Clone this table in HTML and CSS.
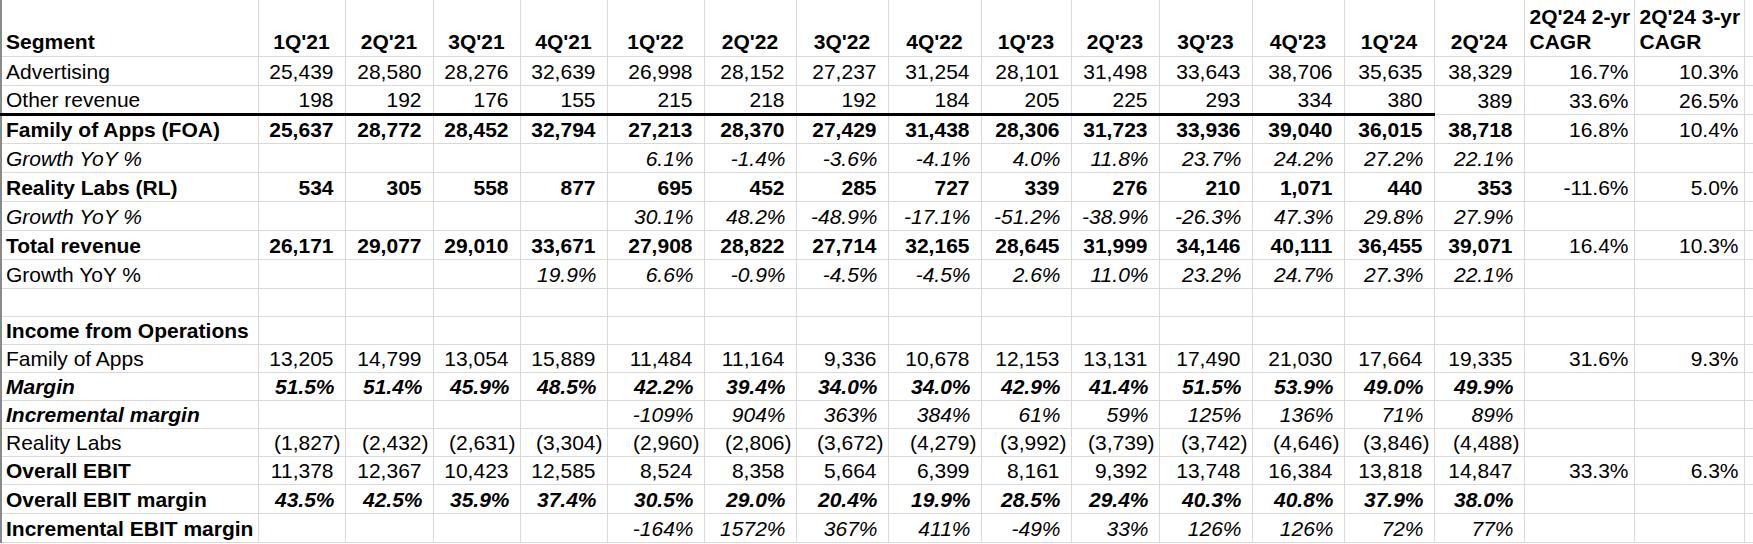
FILE: index.html
```html
<!DOCTYPE html>
<html lang="en">
<head>
<meta charset="utf-8">
<title>Segment financials</title>
<link rel="stylesheet" href="styles.css">
</head>
<body>
<table class="sheet">
<colgroup>
<col class="w-lbl"><col class="w87"><col class="w88"><col class="w87"><col class="w87"><col class="w97"><col class="w92"><col class="w92"><col class="w93"><col class="w90"><col class="w88"><col class="w93"><col class="w92"><col class="w90"><col class="w90"><col class="w110"><col class="w110"><col class="w-x">
</colgroup>
<tbody>
<tr class="hdr">
<td class="lbl b">Segment</td><td class="q">1Q'21</td><td class="q">2Q'21</td><td class="q">3Q'21</td><td class="q">4Q'21</td><td class="q">1Q'22</td><td class="q">2Q'22</td><td class="q">3Q'22</td><td class="q">4Q'22</td><td class="q">1Q'23</td><td class="q">2Q'23</td><td class="q">3Q'23</td><td class="q">4Q'23</td><td class="q">1Q'24</td><td class="q">2Q'24</td><td class="ch"><span class="nw">2Q'24 2-yr</span> CAGR</td><td class="ch"><span class="nw">2Q'24 3-yr</span> CAGR</td><td></td>
</tr>
<tr>
<td class="lbl">Advertising</td><td class="n">25,439</td><td class="n">28,580</td><td class="n">28,276</td><td class="n">32,639</td><td class="n">26,998</td><td class="n">28,152</td><td class="n">27,237</td><td class="n">31,254</td><td class="n">28,101</td><td class="n">31,498</td><td class="n">33,643</td><td class="n">38,706</td><td class="n">35,635</td><td class="n">38,329</td><td class="c">16.7%</td><td class="c">10.3%</td><td></td>
</tr>
<tr class="thick">
<td class="lbl">Other revenue</td><td class="n">198</td><td class="n">192</td><td class="n">176</td><td class="n">155</td><td class="n">215</td><td class="n">218</td><td class="n">192</td><td class="n">184</td><td class="n">205</td><td class="n">225</td><td class="n">293</td><td class="n">334</td><td class="n">380</td><td class="n">389</td><td class="c">33.6%</td><td class="c">26.5%</td><td></td>
</tr>
<tr>
<td class="lbl b">Family of Apps (FOA)</td><td class="n b">25,637</td><td class="n b">28,772</td><td class="n b">28,452</td><td class="n b">32,794</td><td class="n b">27,213</td><td class="n b">28,370</td><td class="n b">27,429</td><td class="n b">31,438</td><td class="n b">28,306</td><td class="n b">31,723</td><td class="n b">33,936</td><td class="n b">39,040</td><td class="n b">36,015</td><td class="n b">38,718</td><td class="c">16.8%</td><td class="c">10.4%</td><td></td>
</tr>
<tr>
<td class="lbl i">Growth YoY %</td><td></td><td></td><td></td><td></td><td class="p">6.1%</td><td class="p">-1.4%</td><td class="p">-3.6%</td><td class="p">-4.1%</td><td class="p">4.0%</td><td class="p">11.8%</td><td class="p">23.7%</td><td class="p">24.2%</td><td class="p">27.2%</td><td class="p">22.1%</td><td></td><td></td><td></td>
</tr>
<tr>
<td class="lbl b">Reality Labs (RL)</td><td class="n b">534</td><td class="n b">305</td><td class="n b">558</td><td class="n b">877</td><td class="n b">695</td><td class="n b">452</td><td class="n b">285</td><td class="n b">727</td><td class="n b">339</td><td class="n b">276</td><td class="n b">210</td><td class="n b">1,071</td><td class="n b">440</td><td class="n b">353</td><td class="c">-11.6%</td><td class="c">5.0%</td><td></td>
</tr>
<tr>
<td class="lbl i">Growth YoY %</td><td></td><td></td><td></td><td></td><td class="p">30.1%</td><td class="p">48.2%</td><td class="p">-48.9%</td><td class="p">-17.1%</td><td class="p">-51.2%</td><td class="p">-38.9%</td><td class="p">-26.3%</td><td class="p">47.3%</td><td class="p">29.8%</td><td class="p">27.9%</td><td></td><td></td><td></td>
</tr>
<tr>
<td class="lbl b">Total revenue</td><td class="n b">26,171</td><td class="n b">29,077</td><td class="n b">29,010</td><td class="n b">33,671</td><td class="n b">27,908</td><td class="n b">28,822</td><td class="n b">27,714</td><td class="n b">32,165</td><td class="n b">28,645</td><td class="n b">31,999</td><td class="n b">34,146</td><td class="n b">40,111</td><td class="n b">36,455</td><td class="n b">39,071</td><td class="c">16.4%</td><td class="c">10.3%</td><td></td>
</tr>
<tr>
<td class="lbl">Growth YoY %</td><td></td><td></td><td></td><td class="p">19.9%</td><td class="p">6.6%</td><td class="p">-0.9%</td><td class="p">-4.5%</td><td class="p">-4.5%</td><td class="p">2.6%</td><td class="p">11.0%</td><td class="p">23.2%</td><td class="p">24.7%</td><td class="p">27.3%</td><td class="p">22.1%</td><td></td><td></td><td></td>
</tr>
<tr class="short">
<td class="lbl"></td><td></td><td></td><td></td><td></td><td></td><td></td><td></td><td></td><td></td><td></td><td></td><td></td><td></td><td></td><td></td><td></td><td></td>
</tr>
<tr class="short">
<td class="lbl b">Income from Operations</td><td></td><td></td><td></td><td></td><td></td><td></td><td></td><td></td><td></td><td></td><td></td><td></td><td></td><td></td><td></td><td></td><td></td>
</tr>
<tr class="short">
<td class="lbl">Family of Apps</td><td class="n">13,205</td><td class="n">14,799</td><td class="n">13,054</td><td class="n">15,889</td><td class="n">11,484</td><td class="n">11,164</td><td class="n">9,336</td><td class="n">10,678</td><td class="n">12,153</td><td class="n">13,131</td><td class="n">17,490</td><td class="n">21,030</td><td class="n">17,664</td><td class="n">19,335</td><td class="c">31.6%</td><td class="c">9.3%</td><td></td>
</tr>
<tr class="short">
<td class="lbl bi">Margin</td><td class="p b">51.5%</td><td class="p b">51.4%</td><td class="p b">45.9%</td><td class="p b">48.5%</td><td class="p b">42.2%</td><td class="p b">39.4%</td><td class="p b">34.0%</td><td class="p b">34.0%</td><td class="p b">42.9%</td><td class="p b">41.4%</td><td class="p b">51.5%</td><td class="p b">53.9%</td><td class="p b">49.0%</td><td class="p b">49.9%</td><td></td><td></td><td></td>
</tr>
<tr class="short">
<td class="lbl bi">Incremental margin</td><td></td><td></td><td></td><td></td><td class="p">-109%</td><td class="p">904%</td><td class="p">363%</td><td class="p">384%</td><td class="p">61%</td><td class="p">59%</td><td class="p">125%</td><td class="p">136%</td><td class="p">71%</td><td class="p">89%</td><td></td><td></td><td></td>
</tr>
<tr class="short">
<td class="lbl">Reality Labs</td><td class="n neg">(1,827)</td><td class="n neg">(2,432)</td><td class="n neg">(2,631)</td><td class="n neg">(3,304)</td><td class="n neg">(2,960)</td><td class="n neg">(2,806)</td><td class="n neg">(3,672)</td><td class="n neg">(4,279)</td><td class="n neg">(3,992)</td><td class="n neg">(3,739)</td><td class="n neg">(3,742)</td><td class="n neg">(4,646)</td><td class="n neg">(3,846)</td><td class="n neg">(4,488)</td><td></td><td></td><td></td>
</tr>
<tr class="short">
<td class="lbl b">Overall EBIT</td><td class="n">11,378</td><td class="n">12,367</td><td class="n">10,423</td><td class="n">12,585</td><td class="n">8,524</td><td class="n">8,358</td><td class="n">5,664</td><td class="n">6,399</td><td class="n">8,161</td><td class="n">9,392</td><td class="n">13,748</td><td class="n">16,384</td><td class="n">13,818</td><td class="n">14,847</td><td class="c">33.3%</td><td class="c">6.3%</td><td></td>
</tr>
<tr>
<td class="lbl b">Overall EBIT margin</td><td class="p b">43.5%</td><td class="p b">42.5%</td><td class="p b">35.9%</td><td class="p b">37.4%</td><td class="p b">30.5%</td><td class="p b">29.0%</td><td class="p b">20.4%</td><td class="p b">19.9%</td><td class="p b">28.5%</td><td class="p b">29.4%</td><td class="p b">40.3%</td><td class="p b">40.8%</td><td class="p b">37.9%</td><td class="p b">38.0%</td><td></td><td></td><td></td>
</tr>
<tr>
<td class="lbl b">Incremental EBIT margin</td><td></td><td></td><td></td><td></td><td class="p">-164%</td><td class="p">1572%</td><td class="p">367%</td><td class="p">411%</td><td class="p">-49%</td><td class="p">33%</td><td class="p">126%</td><td class="p">126%</td><td class="p">72%</td><td class="p">77%</td><td></td><td></td><td></td>
</tr>
</tbody>
</table>
</body>
</html>
```

FILE: styles.css
```css
html, body {
  margin: 0;
  padding: 0;
  background: #ffffff;
}

body {
  overflow: hidden;
  font-family: "Liberation Sans", Arial, sans-serif;
  font-size: 21px;
  color: #000000;
}

.sheet {
  border-collapse: collapse;
  table-layout: fixed;
  width: 1763px;
}

.w-lbl { width: 257px; }
.w87 { width: 87px; }
.w88 { width: 88px; }
.w90 { width: 90px; }
.w92 { width: 92px; }
.w93 { width: 93px; }
.w97 { width: 97px; }
.w110 { width: 110px; }
.w-x { width: 20px; }

.sheet tr { height: 29px; }
.sheet tr.short { height: 28px; }
.sheet tr.hdr { height: 56px; }

.sheet td {
  border: 1px solid #d9d9d9;
  padding: 0 4px 1px 4px;
  line-height: 24px;
  vertical-align: bottom;
  white-space: nowrap;
  text-align: right;
}

.sheet tr.hdr td {
  border-top: 0;
  font-weight: 700;
  padding-bottom: 2px;
}

.sheet td.lbl {
  text-align: left;
  border-left: 2px solid #8a8a8a;
  padding-left: 4px;
}

.sheet td.q { text-align: center; }

.sheet td.ch {
  text-align: left;
  white-space: normal;
  padding-left: 5px;
  padding-right: 0;
  line-height: 25px;
}

.nw { white-space: nowrap; }

.sheet tr.thick td:nth-child(-n+14) {
  border-bottom: 3px solid #000000;
}

.b { font-weight: 700; }
.i { font-style: italic; }
.bi { font-weight: 700; font-style: italic; }

.sheet td.n { padding-right: 11px; }
.sheet td.n.neg { padding-right: 4px; }
.sheet td.p { font-style: italic; padding-right: 10px; }
.sheet td.c { padding-right: 5px; font-weight: 400; }
```
